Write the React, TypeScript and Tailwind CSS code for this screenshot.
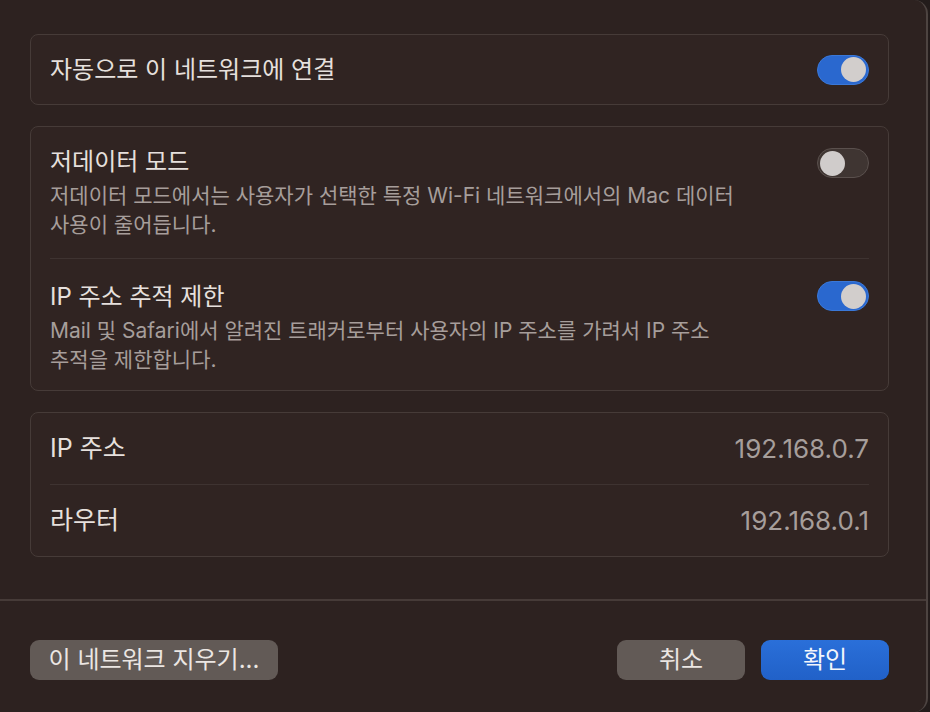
import React from "react";

const font = { fontFamily: 'Inter, "Noto Sans CJK KR", sans-serif' };

function Toggle({ on }: { on: boolean }) {
  return on ? (
    <div className="flex h-[30px] w-[52px] shrink-0 items-center justify-end rounded-full border border-[#3a78d8] bg-[#2a68cf] px-[2px]">
      <div className="h-[25px] w-[25px] rounded-full bg-[#d2cecc]" />
    </div>
  ) : (
    <div className="flex h-[30px] w-[52px] shrink-0 items-center justify-start rounded-full border border-[#5a504d] bg-[#3f3532] px-[2px]">
      <div className="h-[25px] w-[25px] rounded-full bg-[#d0cccb]" />
    </div>
  );
}

export default function App() {
  return (
    <div className="h-[712px] w-[930px] bg-[#231c1b]" style={font}>
      <div className="flex h-[712px] w-[928px] flex-col rounded-tr-[14px] rounded-br-[14px] border-r-2 border-[#4d4441] bg-[#2d2220]">
        <div className="flex flex-col gap-[21px] pl-[30px] pr-[37px] pt-[34px]">
          <div className="flex h-[71px] items-center justify-between rounded-[8px] border border-[#463b38] bg-[#302422] pl-[19px] pr-[19px]">
            <span className="text-[24px] text-[#e6e0dd]">자동으로 이 네트워크에 연결</span>
            <Toggle on />
          </div>

          <div className="flex flex-col rounded-[8px] border border-[#463b38] bg-[#302422] px-[19px]">
            <div className="flex h-[131px] items-start justify-between pt-[20px]">
              <div className="flex flex-col">
                <span className="text-[24px] leading-[30px] text-[#e6e0dd]">저데이터 모드</span>
                <span className="mt-[4px] text-[21px] leading-[29px] text-[#a69e9b]">
                  저데이터 모드에서는 사용자가 선택한 특정 Wi-Fi 네트워크에서의 Mac 데이터
                  <br />
                  사용이 줄어듭니다.
                </span>
              </div>
              <div className="mt-[1px]">
                <Toggle on={false} />
              </div>
            </div>
            <div className="h-px bg-[#3e3331]" />
            <div className="flex h-[131px] items-start justify-between pt-[23px]">
              <div className="flex flex-col">
                <span className="text-[24px] leading-[30px] text-[#e6e0dd]">IP 주소 추적 제한</span>
                <span className="mt-[4px] text-[21px] leading-[29px] text-[#a69e9b]">
                  Mail 및 Safari에서 알려진 트래커로부터 사용자의 IP 주소를 가려서 IP 주소
                  <br />
                  추적을 제한합니다.
                </span>
              </div>
              <div className="-mt-[1px]">
                <Toggle on />
              </div>
            </div>
          </div>

          <div className="flex flex-col rounded-[8px] border border-[#463b38] bg-[#302422] px-[19px]">
            <div className="flex h-[71px] items-center justify-between">
              <span className="text-[25px] text-[#e6e0dd]">IP 주소</span>
              <span className="text-[26px] text-[#a69e9b]">192.168.0.7</span>
            </div>
            <div className="h-px bg-[#3e3331]" />
            <div className="flex h-[71px] items-center justify-between">
              <span className="text-[25px] text-[#e6e0dd]">라우터</span>
              <span className="text-[26px] text-[#a69e9b]">192.168.0.1</span>
            </div>
          </div>
        </div>

        <div className="mt-[42px] h-[2px] bg-[#463b38]" />

        <div className="flex items-center justify-between pl-[30px] pr-[37px] pt-[39px]">
          <button className="flex h-[40px] w-[248px] items-center justify-center rounded-[9px] bg-[#625a56] text-[24px] text-[#ebe6e3]">
            이 네트워크 지우기...
          </button>
          <div className="flex gap-[16px]">
            <button className="flex h-[40px] w-[128px] items-center justify-center rounded-[9px] bg-[#625a56] text-[24px] text-[#ebe6e3]">
              취소
            </button>
            <button className="flex h-[40px] w-[128px] items-center justify-center rounded-[9px] bg-gradient-to-b from-[#2a6fd9] to-[#2161c8] text-[24px] text-[#f3f6fb]">
              확인
            </button>
          </div>
        </div>
      </div>
    </div>
  );
}
